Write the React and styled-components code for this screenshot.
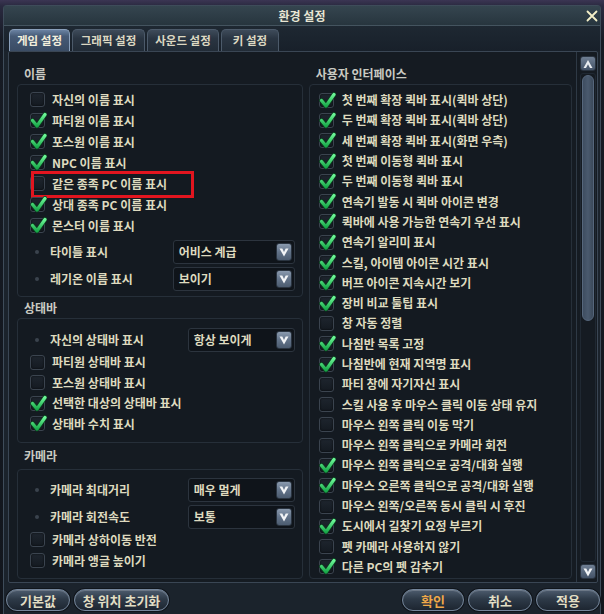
import React from "react";
import styled, { createGlobalStyle } from "styled-components";

const GlobalStyle = createGlobalStyle`
  html, body {
    margin: 0;
    padding: 0;
  }
  body {
    width: 604px;
    height: 614px;
    overflow: hidden;
    background: linear-gradient(180deg, #3b3553 0px, #2a2a40 6px, #161b24 40px, #12161d 100%);
    font-family: "Noto Sans CJK KR", "Noto Sans", sans-serif;
  }
`;

const Window = styled.div`
  margin: 5px 0 0 3px;
  width: 598px;
  height: 609px;
  box-sizing: border-box;
  display: flex;
  flex-direction: column;
  background: #1b232c;
  border: 1px solid #3e4c5a;
  border-bottom: none;
  border-radius: 4px 4px 0 0;
`;

const TitleBar = styled.div`
  height: 19px;
  display: grid;
  grid-template-columns: 1fr auto 1fr;
  align-items: center;
  background: linear-gradient(180deg, #35454f, #27353e);
  border-bottom: 1px solid #44545f;
  color: #e8e6d4;
  font-size: 12px;
  font-weight: 700;
`;

const Title = styled.span`
  grid-column: 2;
  line-height: 1;
`;

const CloseButton = styled.span`
  justify-self: end;
  margin-right: 2px;
  display: flex;
`;

const TabRow = styled.div`
  height: 25px;
  display: flex;
  align-items: flex-end;
  gap: 2px;
  padding-left: 5px;
  background: linear-gradient(180deg, #1e2832, #18202a);
`;

const Tab = styled.div`
  height: 22px;
  width: ${(p) => p.$w}px;
  box-sizing: border-box;
  display: flex;
  align-items: center;
  justify-content: center;
  border-radius: 5px 5px 0 0;
  font-size: 11.5px;
  font-weight: 700;
  line-height: 1;
  color: ${(p) => (p.$active ? "#f2eedc" : "#dcd8c2")};
  background: ${(p) =>
    p.$active
      ? "linear-gradient(180deg, #6a82a2 0%, #465a76 30%, #3a4c64 100%)"
      : "linear-gradient(180deg, #3e4b5a 0%, #2a3542 40%, #222c37 100%)"};
  border: 1px solid ${(p) => (p.$active ? "#8aa0bb" : "#4c5a6a")};
  border-bottom: none;
`;

const Panel = styled.div`
  flex: 1;
  margin: 0 2px 0 4px;
  display: flex;
  background: #151b22;
  border: 1px solid #3a4654;
  border-radius: 2px;
  min-height: 0;
`;

const Column = styled.div`
  width: ${(p) => p.$w}px;
  padding: 0 ${(p) => p.$pr}px 0 ${(p) => p.$pl}px;
  display: flex;
  flex-direction: column;
`;

const Header = styled.div`
  height: ${(p) => p.$h}px;
  box-sizing: border-box;
  display: flex;
  align-items: flex-end;
  padding: 0 0 ${(p) => p.$pb}px 7px;
  color: #cacac2;
  font-size: 12px;
  font-weight: 700;
  line-height: 14px;
`;

const Group = styled.div`
  box-sizing: border-box;
  height: ${(p) => p.$h}px;
  padding: ${(p) => p.$pt}px 7px 0 ${(p) => p.$pl}px;
  border: 1px solid #262f39;
  border-radius: 4px;
  background: #141a21;
  display: flex;
  flex-direction: column;
`;

const Row = styled.div`
  position: relative;
  height: ${(p) => p.$h}px;
  flex-shrink: 0;
  display: flex;
  align-items: center;
  gap: ${(p) => p.$gap}px;
  color: #dedabf;
  font-size: 12px;
  font-weight: 700;
  line-height: 1;
  white-space: nowrap;
`;

const Highlight = styled.span`
  position: absolute;
  left: 1px;
  top: -2px;
  width: 163px;
  height: 27px;
  box-sizing: border-box;
  border: 3px solid #e2151f;
  pointer-events: none;
`;

const Box = styled.span`
  position: relative;
  width: 15px;
  height: 15px;
  flex-shrink: 0;
  box-sizing: border-box;
  border: 1px solid #3b444f;
  border-radius: 3px;
  background: linear-gradient(180deg, #1e252e, #141a21);
  box-shadow: inset 0 0 2px rgba(0, 0, 0, 0.8);

  & svg {
    position: absolute;
    left: -1px;
    top: -2px;
  }
`;

const SelectRow = styled.div`
  height: 24px;
  margin-top: ${(p) => p.$mt}px;
  flex-shrink: 0;
  display: flex;
  align-items: center;
  color: #dedabf;
  font-size: 12px;
  font-weight: 700;
  line-height: 1;
  white-space: nowrap;
`;

const Dot = styled.span`
  width: 4px;
  height: 4px;
  margin: 0 11px 0 5px;
  border-radius: 50%;
  background: #3a434d;
  flex-shrink: 0;
`;

const Select = styled.div`
  margin-left: auto;
  width: ${(p) => p.$w}px;
  height: 24px;
  box-sizing: border-box;
  display: flex;
  align-items: center;
  justify-content: space-between;
  padding: 0 2px 0 5px;
  border: 1px solid #2c343e;
  border-radius: 3px;
  background: #0f141a;
`;

const SelectButton = styled.span`
  width: 16px;
  height: 18px;
  display: flex;
  align-items: center;
  justify-content: center;
  border-radius: 3px;
  border: 1px solid #2a3440;
  box-sizing: border-box;
  background: linear-gradient(180deg, #8a9aae 0%, #627389 50%, #4c5c70 100%);
`;

const ScrollColumn = styled.div`
  width: 21px;
  border-left: 1px solid #2e3945;
  box-sizing: border-box;
  padding: 4px 2px 3px 3px;
  display: flex;
  flex-direction: column;
  gap: 2px;
`;

const ArrowButton = styled.span`
  width: 16px;
  height: 15px;
  flex-shrink: 0;
  box-sizing: border-box;
  display: flex;
  align-items: center;
  justify-content: center;
  border-radius: 3px;
  border: 1px solid #2a3440;
  background: linear-gradient(180deg, #6f7f93, #435267);
`;

const Track = styled.div`
  flex: 1;
  width: 16px;
  box-sizing: border-box;
  border: 1px solid #1f2832;
  border-radius: 3px;
  padding: 1px 1px;
`;

const Thumb = styled.div`
  height: 246px;
  width: 12px;
  box-sizing: border-box;
  border-radius: 6px;
  border: 1px solid #56677c;
  background: linear-gradient(90deg, #3e4d60, #4a5a6e 50%, #3b495a);
`;

const Footer = styled.div`
  height: 31px;
  box-sizing: border-box;
  padding: 6px 0 0 2px;
  display: flex;
  gap: 4px;
`;

const Spacer = styled.div`
  flex: 1;
`;

const Button = styled.div`
  width: ${(p) => p.$w}px;
  height: 22px;
  box-sizing: border-box;
  display: flex;
  align-items: center;
  justify-content: center;
  border-radius: 11px;
  border: 1px solid #74859a;
  background: linear-gradient(180deg, #4d5c6e 0%, #2e3a48 45%, #1d2631 100%);
  box-shadow: inset 0 1px 0 rgba(255, 255, 255, 0.18), 0 0 0 1px #10151b;
  color: ${(p) => (p.$primary ? "#f0a848" : "#e2dec4")};
  font-size: 13px;
  font-weight: 700;
  line-height: 1;
`;

const Check = () => (
  <svg width="17" height="17" viewBox="0 0 17 17">
    <defs>
      <linearGradient id="chk" x1="0" y1="0" x2="0" y2="1">
        <stop offset="0" stopColor="#6cf596" />
        <stop offset="1" stopColor="#19a94a" />
      </linearGradient>
    </defs>
    <polyline
      points="2.5,8.5 7,14 15,2.5"
      fill="none"
      stroke="#0b3d1e"
      strokeWidth="4.8"
      strokeLinejoin="round"
      strokeLinecap="round"
    />
    <polyline
      points="2.5,8.5 7,14 15,2.5"
      fill="none"
      stroke="url(#chk)"
      strokeWidth="3.2"
      strokeLinejoin="round"
      strokeLinecap="round"
    />
  </svg>
);

const CheckBox = ({ checked }) => <Box>{checked && <Check />}</Box>;

const DownIcon = () => (
  <svg width="10" height="10" viewBox="0 0 10 10">
    <polygon points="0.5,1.5 3.3,1.5 5,5 6.7,1.5 9.5,1.5 5,9.5" fill="#f2f4f6" />
  </svg>
);

const UpIcon = () => (
  <svg width="10" height="10" viewBox="0 0 10 10">
    <polygon points="5,1 9.5,9 7,9 5,5.2 3,9 0.5,9" fill="#e8ecf0" />
  </svg>
);

const CloseIcon = () => (
  <svg width="12" height="12" viewBox="0 0 12 12">
    <path d="M1.5 1.5 L10.5 10.5 M10.5 1.5 L1.5 10.5" stroke="#f4f0c8" strokeWidth="1.8" strokeLinecap="round" />
  </svg>
);

const CheckRow = ({ label, checked, h, gap, highlight }) => (
  <Row $h={h} $gap={gap}>
    <CheckBox checked={checked} />
    {label}
    {highlight && <Highlight />}
  </Row>
);

const SelectItem = ({ label, value, w, mt }) => (
  <SelectRow $mt={mt}>
    <Dot />
    {label}
    <Select $w={w}>
      {value}
      <SelectButton>
        <DownIcon />
      </SelectButton>
    </Select>
  </SelectRow>
);

const nameItems = [
  ["자신의 이름 표시", false],
  ["파티원 이름 표시", true],
  ["포스원 이름 표시", true],
  ["NPC 이름 표시", true],
  ["같은 종족 PC 이름 표시", false, true],
  ["상대 종족 PC 이름 표시", true],
  ["몬스터 이름 표시", true],
];

const statusItems = [
  ["파티원 상태바 표시", false],
  ["포스원 상태바 표시", false],
  ["선택한 대상의 상태바 표시", true],
  ["상태바 수치 표시", true],
];

const cameraItems = [
  ["카메라 상하이동 반전", false],
  ["카메라 앵글 높이기", false],
];

const uiItems = [
  ["첫 번째 확장 퀵바 표시(퀵바 상단)", true],
  ["두 번째 확장 퀵바 표시(퀵바 상단)", true],
  ["세 번째 확장 퀵바 표시(화면 우측)", true],
  ["첫 번째 이동형 퀵바 표시", true],
  ["두 번째 이동형 퀵바 표시", true],
  ["연속기 발동 시 퀵바 아이콘 변경", true],
  ["퀵바에 사용 가능한 연속기 우선 표시", true],
  ["연속기 알리미 표시", true],
  ["스킬, 아이템 아이콘 시간 표시", true],
  ["버프 아이콘 지속시간 보기", true],
  ["장비 비교 툴팁 표시", true],
  ["창 자동 정렬", false],
  ["나침반 목록 고정", true],
  ["나침반에 현재 지역명 표시", true],
  ["파티 창에 자기자신 표시", false],
  ["스킬 사용 후 마우스 클릭 이동 상태 유지", false],
  ["마우스 왼쪽 클릭 이동 막기", false],
  ["마우스 왼쪽 클릭으로 카메라 회전", false],
  ["마우스 왼쪽 클릭으로 공격/대화 실행", true],
  ["마우스 오른쪽 클릭으로 공격/대화 실행", true],
  ["마우스 왼쪽/오른쪽 동시 클릭 시 후진", false],
  ["도시에서 길찾기 요정 부르기", true],
  ["펫 카메라 사용하지 않기", false],
  ["다른 PC의 펫 감추기", true],
];

const tabs = [
  ["게임 설정", 61, true],
  ["그래픽 설정", 73],
  ["사운드 설정", 72],
  ["키 설정", 58],
];

export default function App() {
  return (
    <>
      <GlobalStyle />
      <Window>
        <TitleBar>
          <Title>환경 설정</Title>
          <CloseButton>
            <CloseIcon />
          </CloseButton>
        </TitleBar>

        <TabRow>
          {tabs.map(([label, w, active]) => (
            <Tab key={label} $w={w} $active={active}>
              {label}
            </Tab>
          ))}
        </TabRow>

        <Panel>
          <Column $w={294} $pl={8} $pr={3}>
            <Header $h={32} $pb={3}>이름</Header>
            <Group $h={213} $pt={4} $pl={12}>
              {nameItems.map(([label, checked, hl]) => (
                <CheckRow key={label} label={label} checked={checked} highlight={hl} h={21} gap={7} />
              ))}
              <SelectItem label="타이틀 표시" value="어비스 계급" w={122} mt={4} />
              <SelectItem label="레기온 이름 표시" value="보이기" w={122} mt={3} />
            </Group>

            <Header $h={21} $pb={3}>상태바</Header>
            <Group $h={125} $pt={9} $pl={12}>
              <SelectItem label="자신의 상태바 표시" value="항상 보이게" w={107} mt={0} />
              {statusItems.map(([label, checked]) => (
                <CheckRow key={label} label={label} checked={checked} h={20.5} gap={7} />
              ))}
            </Group>

            <Header $h={26} $pb={6}>카메라</Header>
            <Group $h={110} $pt={8} $pl={12}>
              <SelectItem label="카메라 최대거리" value="매우 멀게" w={107} mt={0} />
              <SelectItem label="카메라 회전속도" value="보통" w={107} mt={3} />
              {cameraItems.map(([label, checked]) => (
                <CheckRow key={label} label={label} checked={checked} h={21} gap={7} />
              ))}
            </Group>
          </Column>

          <Column $w={271} $pl={3} $pr={4}>
            <Header $h={32} $pb={3}>사용자 인터페이스</Header>
            <Group $h={495} $pt={5} $pl={9}>
              {uiItems.map(([label, checked]) => (
                <CheckRow key={label} label={label} checked={checked} h={20.3} gap={8} />
              ))}
            </Group>
          </Column>

          <ScrollColumn>
            <ArrowButton>
              <UpIcon />
            </ArrowButton>
            <Track>
              <Thumb />
            </Track>
            <ArrowButton>
              <DownIcon />
            </ArrowButton>
          </ScrollColumn>
        </Panel>

        <Footer>
          <Button $w={64}>기본값</Button>
          <Button $w={95}>창 위치 초기화</Button>
          <Spacer />
          <Button $w={62} $primary>확인</Button>
          <Button $w={64}>취소</Button>
          <Button $w={64}>적용</Button>
        </Footer>
      </Window>
    </>
  );
}
